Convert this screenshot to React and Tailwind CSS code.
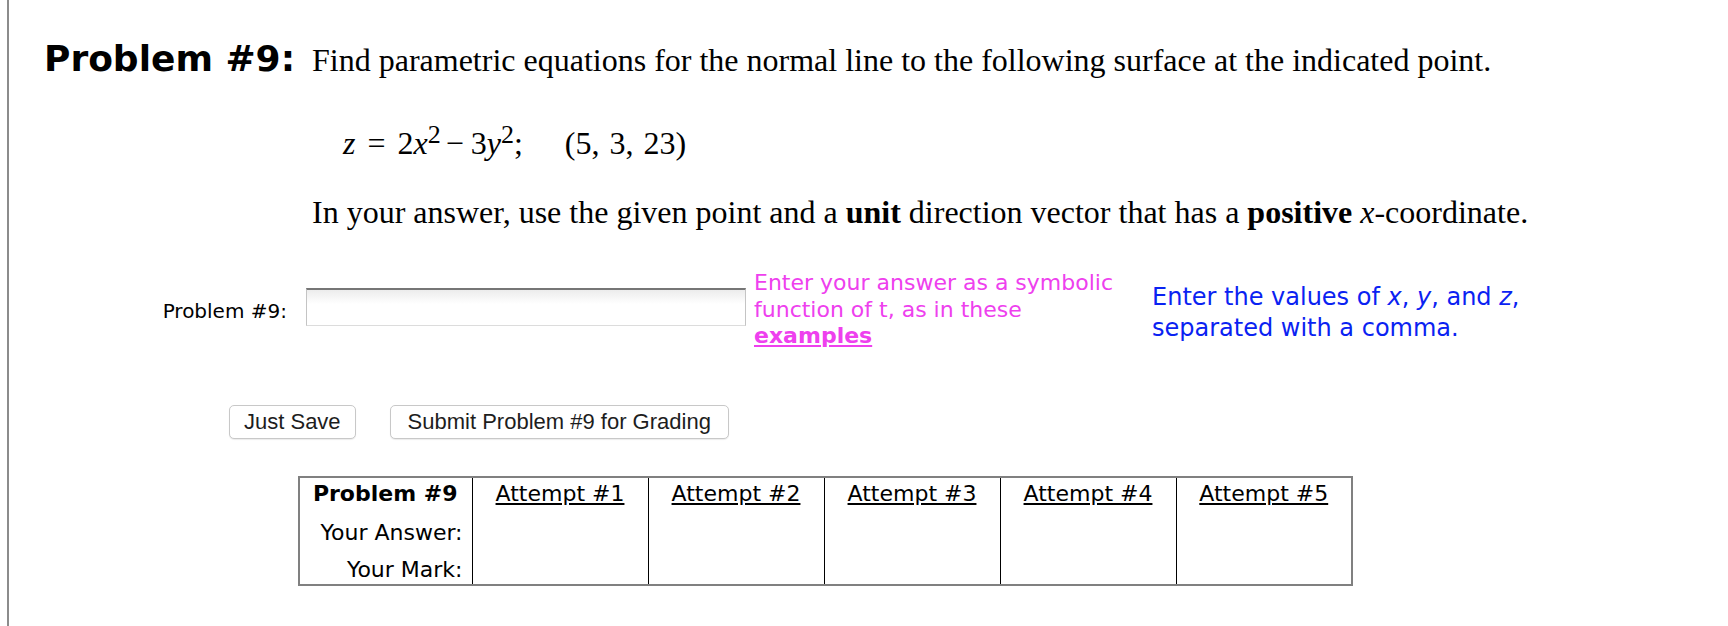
import React from 'react';

const sans = { fontFamily: '"DejaVu Sans", Verdana, sans-serif' };
const serif = { fontFamily: '"Liberation Serif", "Times New Roman", serif' };
const helv = { fontFamily: '"Liberation Sans", Arial, sans-serif' };

const attempts = ['Attempt #1', 'Attempt #2', 'Attempt #3', 'Attempt #4', 'Attempt #5'];

const Sup = ({ children }) => (
    <span className="relative -top-[11px] text-[26px] leading-none">{children}</span>
);

const App = () => {
    return (
        <div className="h-[626px] w-full bg-white overflow-hidden text-black">
            <div className="ml-[7px] h-full border-l-2 border-[#8c8c8c] pt-[37px]">
                {/* question */}
                <div className="flex items-baseline">
                    <div className="w-[303px] shrink-0 pl-[35px] text-[36px] font-bold leading-[44px]" style={sans}>
                        Problem #9:
                    </div>
                    <div className="text-[32px] leading-[44px] whitespace-nowrap" style={serif}>
                        Find parametric equations for the normal line to the following surface at the indicated point.
                    </div>
                </div>

                <div className="mt-[39px] ml-[334px] text-[32px] leading-[44px] whitespace-nowrap" style={serif}>
                    <i>z</i>
                    <span className="mx-[12px]">=</span>
                    2<i>x</i><Sup>2</Sup>
                    <span className="ml-[5px] mr-[7px]">−</span>
                    3<i>y</i><Sup>2</Sup>;
                    <span className="ml-[42px]">(5,</span>
                    <span className="ml-[10px]">3,</span>
                    <span className="ml-[10px]">23)</span>
                </div>

                <div className="mt-[25px] ml-[303px] text-[32px] leading-[44px] whitespace-nowrap" style={serif}>
                    In your answer, use the given point and a <b>unit</b> direction vector that has a{' '}
                    <b>positive</b> <i>x</i>-coordinate.
                </div>

                {/* answer row */}
                <div className="mt-[31px] flex items-center" style={sans}>
                    <div className="w-[280px] shrink-0 pt-[8px] pr-[2px] text-right text-[20px]">Problem #9:</div>
                    <div className="ml-[17px] h-[38px] w-[440px] shrink-0 border border-[#c4c4c4] border-t-2 border-t-[#767676] border-b-[#dcdcdc] bg-gradient-to-b from-[#ececec] to-white to-40%" />
                    <div className="ml-[8px] w-[390px] shrink-0 pt-[5px] text-[22px] leading-[26.5px] text-[#ee40ee]">
                        Enter your answer as a symbolic
                        <br />
                        function of t, as in these
                        <br />
                        <a className="font-bold underline">examples</a>
                    </div>
                    <div className="ml-[8px] pt-[11px] text-[24px] leading-[31px] text-[#0a22f2]">
                        Enter the values of <i>x</i>, <i>y</i>, and <i>z</i>,
                        <br />
                        separated with a comma.
                    </div>
                </div>

                {/* buttons */}
                <div className="mt-[55px] flex gap-[34px] pl-[220px]" style={helv}>
                    <button className="h-[34px] rounded-[5px] border border-[#c8c8c8] bg-white px-[14px] text-[22px] leading-none text-[#1d1d1d] shadow-[0_1px_1px_rgba(0,0,0,0.08)]">
                        Just Save
                    </button>
                    <button className="h-[34px] rounded-[5px] border border-[#c8c8c8] bg-white px-[17px] text-[22px] leading-none text-[#1d1d1d] shadow-[0_1px_1px_rgba(0,0,0,0.08)]">
                        Submit Problem #9 for Grading
                    </button>
                </div>

                {/* attempts table */}
                <div className="mt-[37px] ml-[289px]" style={sans}>
                    <table className="border-collapse border-2 border-[#808080] text-[22px] leading-[22px]">
                        <tbody>
                            <tr className="align-top">
                                <td className="w-[173px] border-r border-black pt-[5px] pb-[4px] pr-[14px] text-right font-bold">Problem #9</td>
                                {attempts.map((a) => (
                                    <td key={a} className="w-[176px] border-r border-black pt-[5px] text-center">
                                        <a className="underline">{a}</a>
                                    </td>
                                ))}
                            </tr>
                            <tr className="align-top">
                                <td className="border-r border-black pt-[13px] pb-[4px] pr-[9px] text-right">Your Answer:</td>
                                {attempts.map((a) => (
                                    <td key={a} className="border-r border-black" />
                                ))}
                            </tr>
                            <tr className="align-top">
                                <td className="border-r border-black pt-[11px] pb-[3px] pr-[9px] text-right">Your Mark:</td>
                                {attempts.map((a) => (
                                    <td key={a} className="border-r border-black" />
                                ))}
                            </tr>
                        </tbody>
                    </table>
                </div>
            </div>
        </div>
    );
};

export default App;
